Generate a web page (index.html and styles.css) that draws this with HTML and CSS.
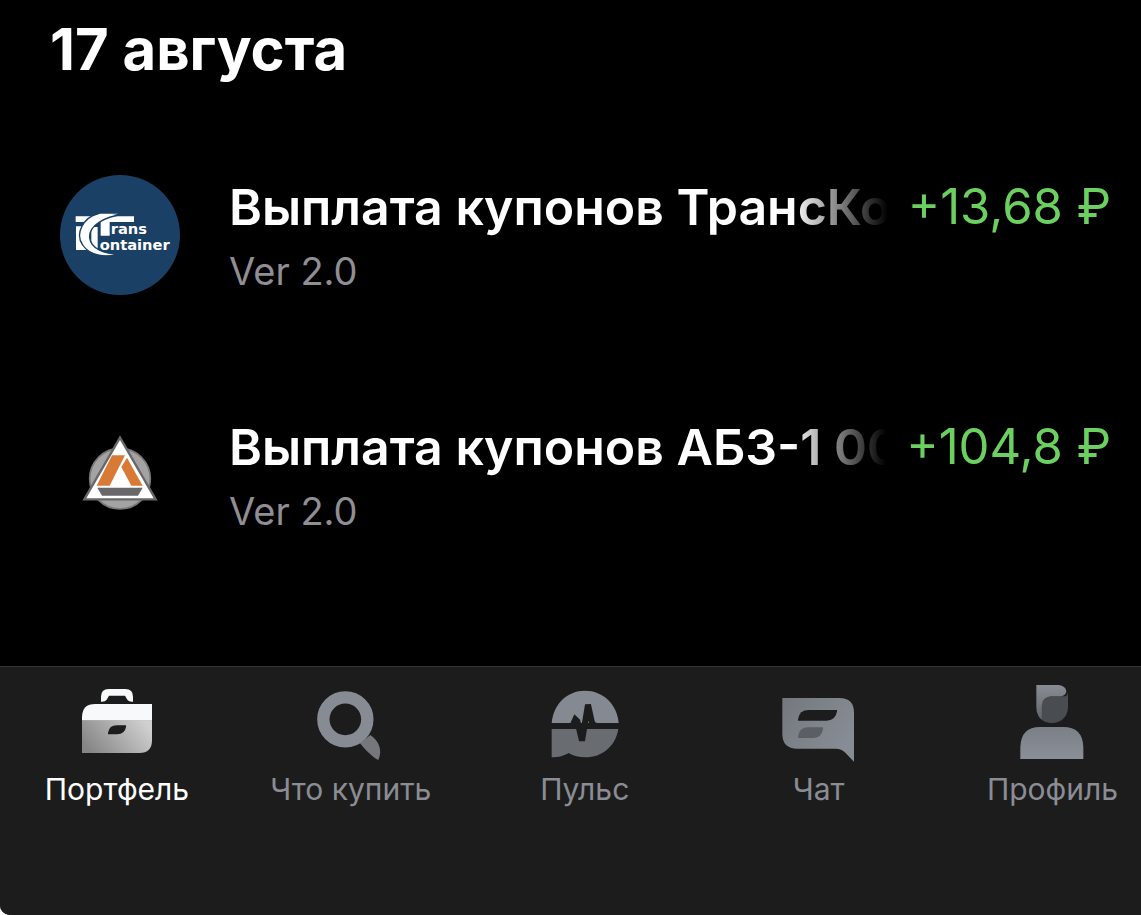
FILE: index.html
```
<!DOCTYPE html>
<html lang="ru">
<head>
  <meta charset="utf-8">
  <meta name="viewport" content="width=device-width, initial-scale=1">
  <title>Портфель</title>
  <link rel="stylesheet" href="styles.css">
</head>
<body>
<div class="app">
  <main class="feed">
    <h1 class="feed-date">17 августа</h1>
    <ul class="operations">
      <li class="operation">
        <svg class="operation-logo" viewBox="30 30 360 360" aria-hidden="true">
          <circle cx="210" cy="210" r="180" fill="#1b4065"/>
          <path fill="#fff" d="M77 154H252V171H77ZM78 184H120V255H78ZM152 165H179V212H152ZM124 186H143V252H124Z"/>
          <path fill="#fff" stroke="#1b4065" stroke-width="4" d="M222 147H142C100 158 74 206 98 240C118 270 164 280 206 267C162 268 122 250 119 218C116 182 160 156 222 147Z"/>
          <path fill="#fff" d="M150 146H205L170 153H135Z"/>
          <text class="logo-text" x="182" y="208">rans</text>
          <text class="logo-text" x="149" y="255">ontainer</text>
        </svg>
        <div class="operation-info">
          <h2 class="operation-title">Выплата купонов ТрансКонтейнер</h2>
          <p class="operation-account">Ver 2.0</p>
        </div>
        <span class="operation-sum">+13,68 ₽</span>
      </li>
      <li class="operation">
        <svg class="operation-logo" viewBox="-30 -30 360 360" aria-hidden="true">
          <circle cx="150" cy="161" r="91" fill="#a3a3a3" stroke="#777" stroke-width="5"/>
          <path fill="#fff" stroke="#696767" stroke-width="7" d="M150 38L257 223H43Z"/>
          <path fill="#d87a35" d="M126 91H165L119 182H80Z"/>
          <path fill="#d87a35" d="M171 98L218 182H184L154 126Z"/>
          <path fill="#696769" d="M82 188H218L204 212H96Z"/>
        </svg>
        <div class="operation-info">
          <h2 class="operation-title">Выплата купонов АБЗ-1 001P-01</h2>
          <p class="operation-account">Ver 2.0</p>
        </div>
        <span class="operation-sum">+104,8 ₽</span>
      </li>
    </ul>
  </main>

  <nav class="tabbar">
    <a class="tab active" href="#portfolio">
      <svg class="tab-icon" viewBox="-9 0 300 255" aria-hidden="true">
        <defs>
          <linearGradient id="case" x1="0" y1="0.7" x2="1" y2="0.3">
            <stop offset="0" stop-color="#858585"/>
            <stop offset="1" stop-color="#d0d0d0"/>
          </linearGradient>
        </defs>
        <path fill="#f8f9fa" d="M93 65V50Q93 27 116 27H166Q189 27 189 50V65Q177 66 172 59L165 47H117L110 59Q105 66 93 65Z"/>
        <path fill="#f8f9fa" d="M36 122V112Q36 72 76 72H246V122Z"/>
        <path fill="url(#case)" d="M36 121H246V181Q246 219 208 219H36Z"/>
        <path fill="#1c1c1c" d="M114 163V158Q118 136 140 136H168V141Q164 163 142 163Z"/>
      </svg>
      <span class="tab-label">Портфель</span>
    </a>
    <a class="tab" href="#buy">
      <svg class="tab-icon" viewBox="3 0 300 255" aria-hidden="true">
        <path fill="#76777c" d="M180 190L211 165C235 181 249 210 235 240C220 234 196 210 180 190Z"/>
        <circle cx="136" cy="118" r="66" fill="none" stroke="#878c94" stroke-width="37"/>
      </svg>
      <span class="tab-label">Что купить</span>
    </a>
    <a class="tab" href="#pulse">
      <svg class="tab-icon" viewBox="0 0 300 255" aria-hidden="true">
        <path fill="#858991" d="M50 129C55 72 96 32 150 32C204 32 246 72 251 129Z"/>
        <path fill="#696d71" d="M50 147H250C241 200 201 232 151 232C132 232 116 228 101 219C87 227 72 232 50 232Z"/>
        <path fill="none" stroke="#1c1c1c" stroke-width="18" d="M50 138H112L121 118L127 124L141 182L159 74L170 124Q173 138 187 138H251"/>
      </svg>
      <span class="tab-label">Пульс</span>
    </a>
    <a class="tab" href="#chat">
      <svg class="tab-icon" viewBox="-3 0 300 255" aria-hidden="true">
        <defs>
          <linearGradient id="bubble" x1="0" y1="0" x2="1" y2="0.6">
            <stop offset="0" stop-color="#74787e"/>
            <stop offset="1" stop-color="#888d95"/>
          </linearGradient>
        </defs>
        <path fill="url(#bubble)" d="M37 54H208Q252 54 252 98V245L226 218Q214 206 198 206H82Q37 206 37 162Z"/>
        <path fill="#1c1c1c" d="M84 122V118Q88 90 116 90H201V94Q197 122 169 122Z"/>
        <path fill="#5b5e64" d="M84 174V169Q88 142 115 142H159V147Q155 174 128 174Z"/>
      </svg>
      <span class="tab-label">Чат</span>
    </a>
    <a class="tab" href="#profile">
      <svg class="tab-icon" viewBox="9 15 300 255" aria-hidden="true">
        <defs>
          <linearGradient id="hair" x1="0" y1="0" x2="0" y2="1">
            <stop offset="0" stop-color="#888d95"/>
            <stop offset="1" stop-color="#62656b"/>
          </linearGradient>
          <linearGradient id="body" x1="0" y1="0" x2="0" y2="1">
            <stop offset="0" stop-color="#7b8087"/>
            <stop offset="1" stop-color="#8b9098"/>
          </linearGradient>
        </defs>
        <path fill="#494c51" d="M123 64H196Q204 60 204 50V96C204 124 184 144 156 144C138 144 123 136 115 122Z"/>
        <path fill="url(#hair)" d="M109 30H176Q198 33 199 50Q196 64 176 64H152Q126 66 125 94V134Q109 120 109 96Z"/>
        <path fill="url(#body)" d="M61 252V216Q63 156 120 156H190Q248 156 250 216V252Z"/>
      </svg>
      <span class="tab-label">Профиль</span>
    </a>
  </nav>
</div>
</body>
</html>
```
FILE: styles.css
```
* {
  box-sizing: border-box;
  margin: 0;
  padding: 0;
}

body {
  background: #fff;
  font-family: Inter, "Liberation Sans", sans-serif;
}

.app {
  display: flex;
  flex-direction: column;
  min-height: 100vh;
  overflow: hidden;
  border-bottom-left-radius: 10px;
  background: #000;
  color: #fff;
}

.feed {
  flex: 1;
  padding: 13px 30px 0 50px;
}

.feed-date {
  margin-bottom: 30px;
  font-size: 58px;
  line-height: 72px;
  font-weight: 700;
}

.operations {
  list-style: none;
}

.operation {
  display: flex;
  align-items: center;
  height: 240px;
  padding-left: 10px;
}

.operation-logo {
  flex: none;
  width: 120px;
  height: 120px;
  margin-right: 49px;
}

.logo-text {
  fill: #fff;
  font-family: "DejaVu Sans", sans-serif;
  font-size: 44px;
  font-weight: 700;
}

.operation-info {
  flex: 1;
  min-width: 0;
}

.operation-title {
  overflow: hidden;
  margin-bottom: 12px;
  font-size: 50px;
  line-height: 60px;
  font-weight: 600;
  white-space: nowrap;
  -webkit-mask-image: linear-gradient(to right, #000 calc(100% - 96px), transparent);
  mask-image: linear-gradient(to right, #000 calc(100% - 96px), transparent);
}

.operation-account {
  color: #8e8e93;
  font-size: 38px;
  line-height: 44px;
}

.operation-sum {
  align-self: flex-start;
  margin: 62px 0 0 20px;
  color: #6bd05f;
  font-size: 49px;
  line-height: 60px;
  white-space: nowrap;
}

/* tabs run slightly past the right edge */
.tabbar {
  display: flex;
  overflow: hidden;
  padding: 13px 0 108px;
  border-top: 1px solid #343434;
  background: #1c1c1c;
}

.tab {
  display: flex;
  flex: 0 0 20.5%;
  flex-direction: column;
  align-items: center;
  gap: 6px;
  color: #8a8d94;
  text-decoration: none;
}

.tab.active {
  color: #fff;
}

.tab-icon {
  width: 100px;
  height: 85px;
}

.tab-label {
  font-size: 30px;
  line-height: 36px;
  white-space: nowrap;
}
```
